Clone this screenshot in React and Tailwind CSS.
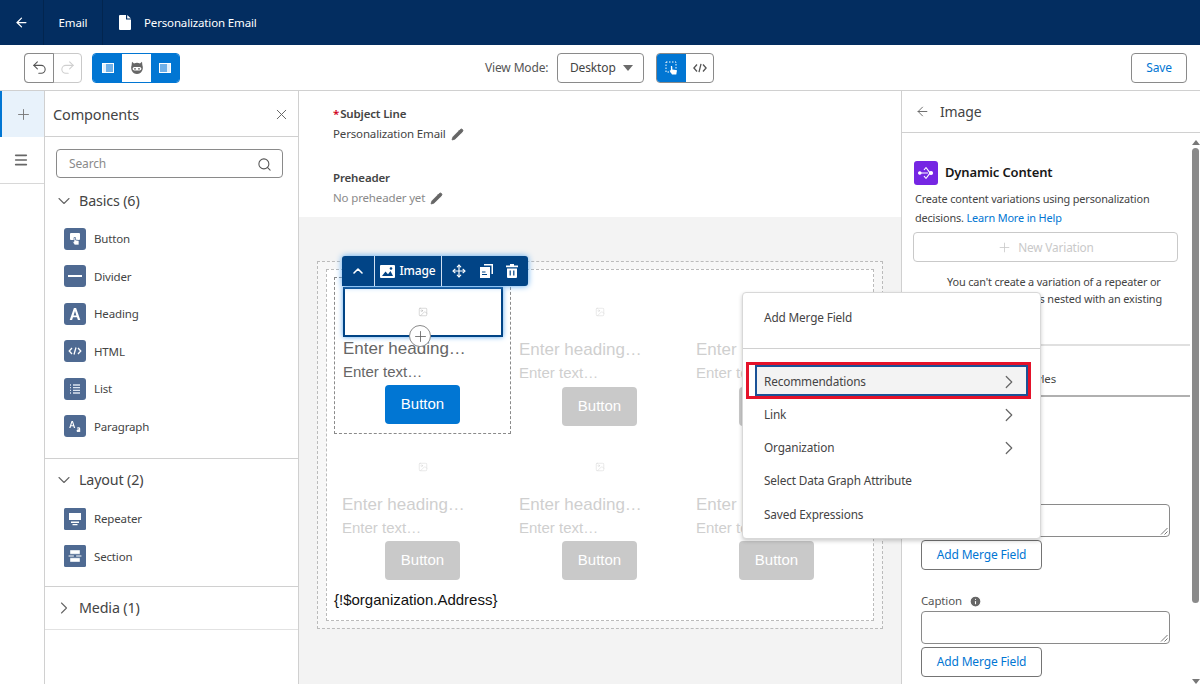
import React from "react";
import { ArrowLeft, Undo2, Redo2, Plus, X, Search, ChevronDown, ChevronRight, ChevronUp, Move, Pencil, Menu, Image as ImageIcon, Info } from "lucide-react";

const ui = "font-['Noto_Sans','Open_Sans',sans-serif] tracking-[-0.15px]";
const arial = "font-['Liberation_Sans',Arial,sans-serif] tracking-normal";

function FileGlyph() {
  return (
    <svg width="12" height="15" viewBox="0 0 12 15" fill="#fff">
      <path d="M1 0h6v4.500h5V14a1 1 0 0 1-1 1H1a1 1 0 0 1-1-1V1a1 1 0 0 1 1-1z" />
      <path d="M8.200 0 12 3.500H8.200z" />
    </svg>
  );
}

function PanelGlyph({ right }) {
  return (
    <svg width="12" height="10" viewBox="0 0 12 10">
      <rect x="0.500" y="0.500" width="11" height="9" fill="none" stroke="#fff" />
      <rect x="1" y="1" width="10" height="8" fill="#6fb0e8" />
      <rect x={right ? 8 : 1} y="1" width="3" height="8" fill="#e3f0fb" />
    </svg>
  );
}

function BotGlyph() {
  return (
    <svg width="14" height="14" viewBox="0 0 14 14" fill="#666">
      <path d="M2 .8 4 2.600a6.500 6.500 0 0 1 6 0L12 .8l.4 3.400c1.500 3.700-.8 8.800-5.400 8.800S.1 7.900 1.600 4.200z" />
      <rect x="2.600" y="6" width="8.800" height="3.600" rx="1.800" fill="#fff" />
      <circle cx="5" cy="7.800" r=".9" />
      <circle cx="9" cy="7.800" r=".9" />
    </svg>
  );
}

function SelectGlyph() {
  return (
    <svg width="14" height="14" viewBox="0 0 14 14" fill="none">
      <rect x="1" y="1" width="10" height="10" stroke="#fff" strokeDasharray="1.500 1.500" />
      <path d="M6.300 5c.6 0 1 .4 1 1v2.500l3.600.6c.6.100 1 .5.900 1.100l-.5 3.300H7L4.900 10.200c-.4-.7.500-1.200 1-.7V6c0-.6-.2-1 .4-1z" fill="#fff" />
    </svg>
  );
}

const componentIcons = {
  Button: (
    <>
      <rect x="6" y="5" width="10" height="7" rx="1" fill="#fff" />
      <path d="M10 9.500h1.500v2.500l3.500.5V17h-4.500L8.500 13.500h1.500z" fill="#fff" stroke="#4f6a92" strokeWidth=".7" />
    </>
  ),
  Divider: <rect x="4" y="10" width="14" height="2" fill="#fff" />,
  Heading: <path d="M9.900 5h2.200l4.200 12h-2.400l-.9-2.800H9l-.9 2.800H5.700zM9.600 12.400h2.800L11 7.900z" fill="#fff" />,
  HTML: <path d="M8 8l-2.800 3L8 14M14 8l2.800 3L14 14M12 7.500l-2 7" fill="none" stroke="#fff" strokeWidth="1.300" />,
  List: <path d="M6 7h1M9 7h7M6 9.700h1M9 9.700h7M6 12.400h1M9 12.400h7M6 15h1M9 15h7" stroke="#dbe4f0" strokeWidth="1.300" />,
  Paragraph: <path d="M7.500 6h1.400l2.300 7H9.900l-.5-1.700H7l-.5 1.700H5.200zM7.300 10.300h1.800l-.9-3zM13.200 12.500c1.200-.5 3-.3 3 1.200v3.300h-1v-.5c-.8.900-2.600.7-2.600-.7 0-1.200 1.400-1.500 2.600-1.500 0-.9-1.100-.8-1.900-.4z" fill="#fff" />,
  Repeater: <path d="M5 5h12v7H5zM7 13.500h8V15H7zM8.500 16h5v1.200h-5z" fill="#fff" />,
  Section: <path d="M6 5h10v4.200H6zM4.500 10.300h5.500v1.400H4.500zM12 10.300h5.500v1.400H12zM6 12.800h10V17H6z" fill="#fff" stroke="#4f6a92" strokeWidth=".4" />,
};

function ComponentRow({ name, square }) {
  return (
    <div className="flex h-[37.500px] items-center">
      <svg width="22" height="22" viewBox="0 0 22 22" className="ml-[19px] shrink-0">
        <rect width="22" height="22" rx={square ? 1.500 : 3} fill="#4f6a92" />
        {componentIcons[name]}
      </svg>
      <span className="ml-2 text-[11.500px] text-[#444]">{name}</span>
    </div>
  );
}

function SectionTitle({ label, open }) {
  const Chevron = open ? ChevronDown : ChevronRight;
  return (
    <div className="flex h-[22px] items-center">
      <Chevron size={20} strokeWidth={1.300} className="ml-[9px] text-[#666]" />
      <span className="ml-[5px] text-[14.300px] text-[#444]">{label}</span>
    </div>
  );
}

function ImageMark({ faded }) {
  return <ImageIcon size={10} strokeWidth={1.200} className={faded ? "text-[#d4d4d4]" : "text-[#b3b3b3]"} />;
}

function EmailCard({ low }) {
  return (
    <div className={`${arial} h-[155px] pl-2`}>
      <div className="flex h-[60px] items-center justify-center pt-[10px] pr-2">
        <ImageMark faded />
      </div>
      <div className="h-[24px] pt-px text-[17px] leading-[24px] text-[#cfcfcf]">Enter heading…</div>
      <div className="h-[24px] text-[15px] leading-[24px] text-[#cfcfcf]">Enter text…</div>
      <div className={`${low ? "mt-px" : "mt-[2px]"} ml-[43px] flex h-[39px] w-[75px] items-center justify-center rounded-[4px] bg-[#c9c9c9] text-[15px] text-white`}>Button</div>
    </div>
  );
}

function SelectedCard() {
  return (
    <div className={`${arial} -mb-[2px] h-[157px] border border-dashed border-[#8a8a8a] pl-2`}>
      <div className="mt-[9px] flex h-[50px] w-[160px] items-center justify-center border-2 border-[#014486] bg-white shadow-[0_0_5px_#58a6ee]">
        <ImageMark />
      </div>
      <div className="h-[24px] text-[17px] leading-[24px] text-[#666]">Enter heading…</div>
      <div className="h-[22px] text-[15px] leading-[22px] text-[#666]">Enter text…</div>
      <div className="ml-[42px] mt-[2px] flex h-[39px] w-[75px] items-center justify-center rounded-[4px] bg-[#0176d3] text-[15px] text-white">Button</div>
    </div>
  );
}

function MergeFieldButton() {
  return (
    <button className="flex h-[30px] w-[121px] items-center justify-center rounded-[4px] border border-[#747474] bg-white text-[12px] text-[#0176d3]">
      Add Merge Field
    </button>
  );
}

function FieldBox() {
  return (
    <div className="relative h-[33px] w-[249px] rounded-[4px] border border-[#8a8a8a] bg-white">
      <svg width="8" height="8" viewBox="0 0 8 8" className="absolute bottom-px right-px">
        <path d="M1 7.500 7.500 1M4.500 7.500l3-3" stroke="#777" strokeWidth="1" />
      </svg>
    </div>
  );
}

function MenuItem({ label, more }) {
  return (
    <div className="flex h-[33.300px] items-center justify-between pl-[21px] pr-[20px] text-[11.800px] text-[#444]">
      {label}
      {more && <ChevronRight size={22} strokeWidth={1.300} className="text-[#666]" />}
    </div>
  );
}

export default function App() {
  return (
    <div className={`${ui} flex h-[684px] w-[1200px] flex-col overflow-hidden bg-white`}>
      <header className="flex h-[45px] shrink-0 items-center bg-[#032d60] text-[11.500px] text-white">
        <div className="flex h-full w-[44px] items-center justify-center border-r border-[#02254f]">
          <ArrowLeft size={15} strokeWidth={2} />
        </div>
        <div className="flex h-full w-[59px] items-center justify-center border-r border-[#02254f]">Email</div>
        <div className="ml-[16px] flex items-center">
          <FileGlyph />
          <span className="ml-[13px]">Personalization Email</span>
        </div>
      </header>

      <div className="flex h-[46px] shrink-0 items-center border-b border-[#d0d0d0]">
        <div className="ml-6 flex h-[30px] w-[58px] rounded-[4px] border border-[#c9c9c9]">
          <div className="-m-px flex h-[30px] w-[30px] items-center justify-center rounded-l-[4px] border border-[#8a8a8a]">
            <Undo2 size={17} strokeWidth={1.500} className="text-[#555]" />
          </div>
          <div className="flex flex-1 items-center justify-center">
            <Redo2 size={17} strokeWidth={1.500} className="text-[#cfcfcf]" />
          </div>
        </div>
        <div className="ml-[10px] flex h-[30px] w-[88px] overflow-hidden rounded-[4px] border border-[#0176d3]">
          <div className="flex w-[29px] items-center justify-center bg-[#0176d3]"><PanelGlyph /></div>
          <div className="flex w-[29px] items-center justify-center bg-white"><BotGlyph /></div>
          <div className="flex flex-1 items-center justify-center bg-[#0176d3]"><PanelGlyph right /></div>
        </div>
        <span className="ml-[305px] w-[65px] shrink-0 whitespace-nowrap text-[12px] text-[#555]">View Mode:</span>
        <div className="ml-[7px] flex h-[30px] w-[87px] items-center justify-between rounded-[4px] border border-[#8a8a8a] pl-3 pr-[10px] text-[12px] text-[#444]">
          Desktop
          <span className="h-0 w-0 border-x-[5px] border-t-[6px] border-x-transparent border-t-[#6b6b6b]" />
        </div>
        <div className="ml-[12px] flex h-[30px] w-[58px] overflow-hidden rounded-[4px] border border-[#8a8a8a]">
          <div className="flex w-[29px] items-center justify-center bg-[#0176d3]"><SelectGlyph /></div>
          <div className="flex flex-1 items-center justify-center text-[#555]">
            <svg width="14" height="10" viewBox="0 0 14 10" fill="none" stroke="currentColor" strokeWidth="1.300">
              <path d="M4 1.500.9 5 4 8.500M10 1.500 13.100 5 10 8.500M8 .8 6 9.200" />
            </svg>
          </div>
        </div>
        <button className="ml-auto mr-[13px] flex h-[30px] w-[56px] items-center justify-center rounded-[4px] border border-[#8a8a8a] text-[12px] text-[#0176d3]">Save</button>
      </div>

      <div className="relative flex min-h-0 flex-1">
        <nav className="w-[45px] shrink-0 border-r border-[#d0d0d0]">
          <div className="flex h-[46px] items-center justify-center border-l-2 border-[#0176d3] bg-[#e8f2fb]">
            <Plus size={17} strokeWidth={1.300} className="text-[#777]" />
          </div>
          <div className="flex h-[47px] items-center justify-center border-b border-[#d8d8d8] pr-[3px]">
            <Menu size={16} strokeWidth={2.400} className="text-[#666]" />
          </div>
        </nav>

        <aside className="w-[254px] shrink-0 border-r border-[#d0d0d0]">
          <div className="flex h-[46px] items-center justify-between border-b border-[#d0d0d0] pl-2 pr-[8px] pt-[2px]">
            <span className="text-[14.500px] text-[#444]">Components</span>
            <X size={17} strokeWidth={1.400} className="text-[#666]" />
          </div>
          <div className="ml-[11px] mt-3 flex h-[29px] w-[227px] items-center justify-between rounded-[4px] border border-[#8a8a8a] pl-3 pr-[10px] pt-px text-[12px] text-[#8a8a8a]">
            Search
            <Search size={15} strokeWidth={1.700} className="text-[#555]" />
          </div>
          <div className="mt-[12px]"><SectionTitle label="Basics (6)" open /></div>
          <div className="mt-[8px] h-[239px] border-b border-[#d0d0d0]">
            {["Button", "Divider", "Heading", "HTML", "List", "Paragraph"].map((n) => (
              <ComponentRow key={n} name={n} />
            ))}
          </div>
          <div className="mt-[10px]"><SectionTitle label="Layout (2)" open /></div>
          <div className="mt-[9px] h-[87px] border-b border-[#d0d0d0]">
            <ComponentRow name="Repeater" square />
            <ComponentRow name="Section" square />
          </div>
          <div className="flex h-[43px] items-center border-b border-[#e2e2e2]"><SectionTitle label="Media (1)" /></div>
        </aside>

        <main className="min-w-0 flex-1 bg-[#f3f3f3]">
          <div className="h-[126px] bg-white pl-[34px] pt-[15px] text-[11.500px]">
            <div className="font-semibold leading-[16px] text-[#444]"><span className="mr-px text-[#d0021b]">*</span>Subject Line</div>
            <div className="mt-[4px] flex items-center leading-[16px] text-[#444]">
              Personalization Email
              <Pencil size={13} fill="#666" strokeWidth={1.500} className="ml-[5px] text-[#666]" />
            </div>
            <div className="mt-[28px] font-semibold leading-[16px] text-[#444]">Preheader</div>
            <div className="mt-[4px] flex items-center leading-[16px] text-[#8a8a8a]">
              No preheader yet
              <Pencil size={13} fill="#666" strokeWidth={1.500} className="ml-[5px] text-[#666]" />
            </div>
          </div>
          <div className="pl-[18px] pt-[44px]">
            <div className="h-[368px] w-[566px] border border-dashed border-[#bbb] bg-[#f7f7f7] p-[7px] pl-2">
              <div className="h-[352px] w-[548px] border border-dashed border-[#bbb] bg-white pl-[7px] pt-[7px]">
                <div className="grid grid-cols-[177px_177px_177px]">
                  <SelectedCard />
                  <EmailCard />
                  <EmailCard />
                  <EmailCard low />
                  <EmailCard low />
                  <EmailCard low />
                </div>
                <div className={`${arial} mt-[3px] h-[20px] text-[15px] leading-[20px] text-[#111]`}>{"{!$organization.Address}"}</div>
              </div>
            </div>
          </div>
        </main>

        <section className="flex w-[299px] shrink-0 flex-col border-l border-[#d0d0d0]">
          <div className="flex h-[42px] shrink-0 items-center border-b border-[#d0d0d0] pl-[13px]">
            <ArrowLeft size={15} strokeWidth={1.500} className="text-[#666]" />
            <span className="ml-[10px] text-[14px] text-[#444]">Image</span>
          </div>
          <div className="flex min-h-0 flex-1">
            <div className="w-[288px] shrink-0 overflow-hidden">
              <div className="ml-3 mt-[28px] flex items-center">
                <span className="flex h-[24px] w-[24px] items-center justify-center rounded-[3px] bg-[#7526e3]">
                  <svg width="16" height="14" viewBox="0 0 16 14" fill="none" stroke="#fff" strokeWidth="1.200">
                    <path d="M1 7h9M8 1.500 12 7l-4 5.500M6 4l2-2.500M6 10l2 2.500" />
                    <circle cx="1.800" cy="7" r="1.200" fill="#fff" />
                    <circle cx="13" cy="7" r="1.500" fill="#fff" />
                  </svg>
                </span>
                <span className="ml-[7px] text-[13px] font-semibold text-[#181818]">Dynamic Content</span>
              </div>
              <p className="ml-[13px] mt-[4px] text-[10.900px] leading-[19px] text-[#444]">
                Create content variations using personalization<br />
                decisions. <span className="text-[#0176d3]">Learn More in Help</span>
              </p>
              <div className="ml-[11px] mt-[5px] flex h-[30px] w-[265px] items-center justify-center rounded-[4px] border border-[#c9c9c9] pt-px text-[11.800px] text-[#c9c9c9]">
                <Plus size={15} strokeWidth={1.300} className="mr-[6px]" />
                New Variation
              </div>
              <p className="mt-[11px] pl-[45px] pr-[28px] text-[10.900px] leading-[17px] text-[#444]">
                You can't create a variation of a repeater or<br />
                <span className="block whitespace-nowrap text-right">a component that's nested with an existing</span>
              </p>
              <div className="mt-[37px] h-[53px] border-t-2 border-b-2 border-t-[#e0e0e0] border-b-[#b0b0b0] pt-[25px] text-[11.500px] leading-[16px] text-[#444]">
                <span className="block pr-[134px] text-right">Styles</span>
              </div>
              <div className="ml-[19px] mt-[107px]"><FieldBox /></div>
              <div className="ml-[19px] mt-[3px]"><MergeFieldButton /></div>
              <div className="ml-[19px] mt-[24px] flex h-[14px] items-center text-[11.500px] text-[#555]">
                Caption
                <Info size={13} fill="#666" stroke="#fff" strokeWidth={2} className="ml-[7px]" />
              </div>
              <div className="ml-[19px] mt-[3px]"><FieldBox /></div>
              <div className="ml-[19px] mt-[3px]"><MergeFieldButton /></div>
            </div>
            <div className="flex w-[10px] shrink-0 flex-col items-center pl-px">
              <span className="mt-[7px] h-0 w-0 shrink-0 border-x-[4px] border-b-[5px] border-x-transparent border-b-[#777]" />
              <span className="mt-[3px] h-[455px] w-[7px] shrink-0 rounded-[4px] bg-[#8a8a8a]" />
              <span className="mt-auto h-0 w-0 shrink-0 border-x-[4px] border-t-[5px] border-x-transparent border-t-[#777]" />
            </div>
          </div>
        </section>

        {/* block toolbar and the merge field menu float over the canvas */}
        <div className="absolute left-[342px] top-[165px] z-20 flex h-[30px] w-[186px] items-center rounded-t-[3px] rounded-br-[3px] bg-[#014486] text-white shadow-[0_0_6px_#58a6ee]">
          <div className="flex h-full w-[33px] items-center justify-center border-r border-[#cfe0f2]"><ChevronUp size={16} strokeWidth={2.400} /></div>
          <div className="flex h-full w-[67px] items-center justify-center border-r border-[#cfe0f2] text-[12px] font-medium">
            <svg width="15" height="13" viewBox="0 0 15 13" className="mr-[4px]">
              <rect width="15" height="13" rx="1" fill="#fff" />
              <path d="M2 11l3.500-4.500 2.500 2.700L10.500 6 13 11z" fill="#014486" />
              <circle cx="11" cy="3.500" r="1.300" fill="#014486" />
            </svg>
            Image
          </div>
          <div className="flex flex-1 items-center justify-between pl-[10px] pr-[10px]">
            <Move size={14} strokeWidth={2} />
            <svg width="13" height="14" viewBox="0 0 13 14" fill="#fff">
              <path d="M4 0h9v10h-1.500V1.500H4z" />
              <path d="M0 3h10v11H0z" />
              <path d="M2 8h3.500M2 10.500h5" stroke="#014486" strokeWidth="1.200" />
            </svg>
            <svg width="12" height="14" viewBox="0 0 12 14" fill="#fff">
              <path d="M4 0h4v1.500h4v1.800H0V1.500h4zM1 4.500h10V13a1 1 0 0 1-1 1H2a1 1 0 0 1-1-1z" />
              <path d="M4.200 6.500v5M7.800 6.500v5" stroke="#014486" strokeWidth="1.200" />
            </svg>
          </div>
        </div>
        <div className="absolute left-[409px] top-[234px] z-20 flex h-[22px] w-[22px] items-center justify-center rounded-full border border-[#8a8a8a] bg-white">
          <Plus size={17} strokeWidth={1.200} className="text-[#666]" />
        </div>
        <div className="absolute left-[742px] top-[201px] z-30 h-[247px] w-[299px] rounded-[4px] border border-[#d8d8d8] bg-white shadow-[0_2px_4px_rgba(0,0,0,0.2)]">
          <div className="flex h-[56px] items-center border-b border-[#d0d0d0] pb-[5px] pl-[21px] text-[11.800px] text-[#444]">Add Merge Field</div>
          <div className="ml-[3px] mt-[13px] h-[37px] w-[285px] border-[3px] border-[#e4122a] bg-white pl-[6px]">
            <div className="flex h-[31px] items-center justify-between border-2 border-[#1b5297] bg-[#f3f3f3] pl-[7px] pr-[6px] pt-[2px] text-[11.800px] text-[#444]">
              Recommendations
              <ChevronRight size={22} strokeWidth={1.300} className="text-[#666]" />
            </div>
          </div>
          <div className="-mt-px">
            <MenuItem label="Link" more />
            <MenuItem label="Organization" more />
            <MenuItem label="Select Data Graph Attribute" />
            <MenuItem label="Saved Expressions" />
          </div>
        </div>
      </div>
    </div>
  );
}
